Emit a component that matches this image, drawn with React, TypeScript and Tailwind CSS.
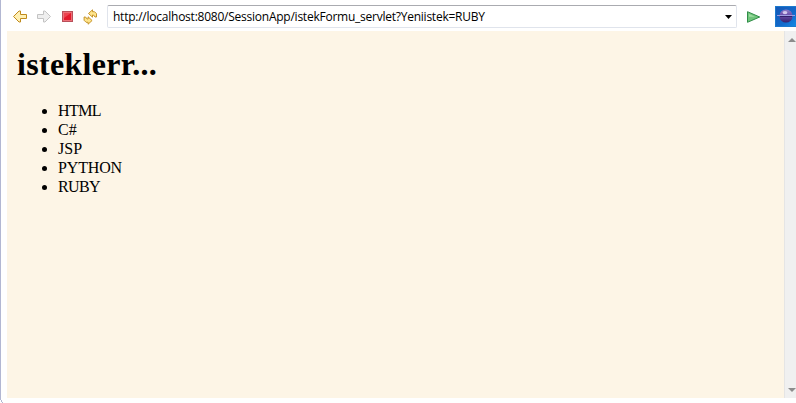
import React from "react";

const items = [
  { name: "HTML", spacing: "tracking-[-0.6px]" },
  { name: "C#", spacing: "tracking-normal" },
  { name: "JSP", spacing: "tracking-normal" },
  { name: "PYTHON", spacing: "tracking-[-0.15px]" },
  { name: "RUBY", spacing: "tracking-[-0.6px]" },
];

function Arrow({ forward = false }: { forward?: boolean }) {
  return (
    <svg width="16" height="16" viewBox="0 0 16 16" className="shrink-0">
      <g transform={forward ? "translate(16 0) scale(-1 1)" : undefined}>
        <path
          d="M1.5 7.5 L7 2 H8.5 V5.5 H14.5 V9.5 H8.5 V13 H7 Z"
          fill={forward ? "#eeeeee" : "#fff0b4"}
          stroke={forward ? "#c3c3c3" : "#c08a1c"}
        />
      </g>
    </svg>
  );
}

function Stop() {
  return (
    <svg width="11" height="11" viewBox="0 0 11 11" className="shrink-0">
      <rect x=".5" y=".5" width="10" height="10" fill="#ee7078" stroke="#b8505a" />
      <rect x="2" y="2" width="7" height="7" fill="#e3192c" />
      <path d="M2 2H9L2 7Z" fill="#ec4450" />
    </svg>
  );
}

function Refresh() {
  const piece = "M5.5 4.5 L9.5 .8 V2.7 H11.5 L13.5 4.7 V8 H12 L10.5 6 H9.5 V8.2 Z";
  return (
    <svg width="15" height="16" viewBox="0 0 15 16" className="shrink-0" fill="#ffe58c" stroke="#c08a1c" strokeWidth=".9" strokeLinejoin="round">
      <path d={piece} />
      <path d={piece} transform="rotate(180 7.3 8)" />
    </svg>
  );
}

function Go() {
  return (
    <svg width="14" height="12" viewBox="0 0 14 12" className="shrink-0">
      <path d="M.5 .7 L12.7 6 L.5 11.3 Z" fill="#70c57b" stroke="#308d48" />
      <path d="M2 3L8 5.7H2Z" fill="#a0dda2" />
    </svg>
  );
}

function Globe() {
  return (
    <svg width="21" height="21" viewBox="0 0 21 21" className="shrink-0">
      <defs>
        <linearGradient id="sky" x1="0" y1="0" x2="1" y2="1">
          <stop stopColor="#1557b5" />
          <stop offset=".6" stopColor="#126acb" />
          <stop offset="1" stopColor="#168be5" />
        </linearGradient>
        <linearGradient id="planet" x1="0" y1="0" x2="0" y2="1">
          <stop stopColor="#8c7cc8" />
          <stop offset=".45" stopColor="#6a4ea8" />
          <stop offset="1" stopColor="#33206c" />
        </linearGradient>
      </defs>
      <rect x=".5" y=".5" width="21" height="20" fill="url(#sky)" stroke="#1c79cd" />
      <circle cx="11" cy="10" r="6.6" fill="url(#planet)" />
      <path d="M2 9.5H20" stroke="#9d9be0" />
      <path d="M5 10.5H17" stroke="#33206c" />
      <ellipse cx="10" cy="6.6" rx="2.4" ry="1.6" fill="#d2c8ed" />
    </svg>
  );
}

function ScrollArrow({ down = false }: { down?: boolean }) {
  return (
    <svg width="8" height="4" viewBox="0 0 8 4" className="ml-[3px] shrink-0">
      <path d={down ? "M0 0H8L4 4Z" : "M0 4H8L4 0Z"} fill="#8c8c8c" />
    </svg>
  );
}

export default function App() {
  return (
    <div className="flex h-[403px] w-[796px] flex-col overflow-hidden bg-white text-black">
      <div className="flex h-[400px] shrink-0 flex-col border-l border-[#b2b7d2]">
        <header className="flex h-[31px] shrink-0 items-center pt-[2px]">
          <div className="ml-[11px] flex items-center gap-2">
            <Arrow />
            <Arrow forward />
          </div>
          <div className="ml-[10px]"><Stop /></div>
          <div className="ml-[10px]"><Refresh /></div>
          <div className="ml-[9px] flex h-[23px] w-[630px] shrink-0 items-center justify-between rounded-[2px] border border-[#e0e4ec] border-t-[#aaabb0] pl-[5px] pr-1">
            <span className="whitespace-nowrap font-['Open_Sans','Noto_Sans',sans-serif] text-[12px] leading-[18px] tracking-[-0.24px]">
              http://localhost:8080/SessionApp/istekFormu_servlet?Yeniistek=RUBY
            </span>
            <svg width="7" height="4" viewBox="0 0 7 4"><path d="M0 0H7L3.5 4Z" /></svg>
          </div>
          <div className="ml-[10px]"><Go /></div>
          <div className="ml-[14px]"><Globe /></div>
        </header>
        <div className="ml-[6px] flex h-[367px]">
          <main className="w-[777px] bg-[#fdf5e6] pl-[10px] pt-[15px] font-['Liberation_Serif',serif]">
            <h1 className="text-[32px] font-bold leading-[37px] tracking-[0.3px]">isteklerr...</h1>
            <ul className="mt-[18px] list-disc pl-[41px] text-[16px] leading-[19px]">
              {items.map((item) => (
                <li key={item.name} className={item.spacing}>{item.name}</li>
              ))}
            </ul>
          </main>
          <aside className="flex w-[12px] flex-col justify-between border-l border-[#e5e5e5] bg-[#f0f0f0] pb-[6px] pt-[7px]">
            <ScrollArrow />
            <ScrollArrow down />
          </aside>
        </div>
      </div>
      <svg width="3" height="3" viewBox="0 0 3 3"><path d="M1 0H2V2H3V3H2V2H1Z" fill="#b2b7d2" /></svg>
    </div>
  );
}
